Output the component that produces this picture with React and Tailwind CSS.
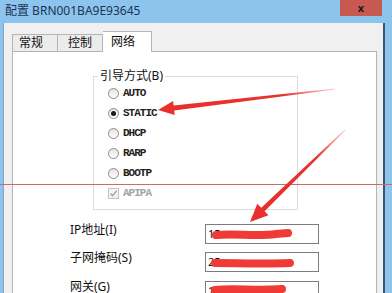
const modes = [
  { label: 'AUTO' },
  { label: 'STATIC', checked: true },
  { label: 'DHCP' },
  { label: 'RARP' },
  { label: 'BOOTP' },
];

const fields = [
  { label: 'IP地址(I)', value: '15', mt: 'mt-0' },
  { label: '子网掩码(S)', value: '25', mt: 'mt-[8px]' },
  { label: '网关(G)', value: '1', mt: 'mt-[9px]' },
];

const cjk = "font-['Noto_Sans','Noto_Sans_CJK_SC',sans-serif]";
const serifMono = "font-['Courier_New','Liberation_Mono',monospace]";

const Radio = ({ label, checked }) => (
  <div className="flex h-[20px] items-center gap-[4px]">
    <span className="flex h-[11px] w-[11px] items-center justify-center rounded-full border border-[#8a8a8a] bg-gradient-to-b from-[#e4e4e4] to-white">
      {checked && <span className="h-[5px] w-[5px] rounded-full bg-[#1a1a1a]" />}
    </span>
    <span className={`${serifMono} text-[11px] font-bold tracking-[-1px] text-[#222]`}>{label}</span>
  </div>
);

const Scribble = ({ d }) => (
  <svg className="pointer-events-none absolute left-0 top-0" width="114" height="20" viewBox="0 0 114 20">
    <path d={d} fill="none" stroke="#f03a36" strokeWidth="8" strokeLinecap="round" strokeLinejoin="round" />
  </svg>
);

const scribbles = [
  'M10 10 C30 8 50 12 70 9 L82 8',
  'M9 10 C30 10 55 11 84 10',
  'M9 8 C28 6 50 9 76 7',
];

export default function App() {
  return (
    <div className="relative flex h-[293px] w-[392px] flex-col overflow-hidden bg-[#8cc4ee]">
      <div className="flex h-[23px] shrink-0 flex-row items-start">
        <span className={`${cjk} pl-[5px] pt-[3px] text-[12px] leading-[16px] text-[#1d3553]`}>配置 BRN001BA9E93645</span>
        <span className="flex-1" />
        <span className="mr-[10px] inline-block h-[16px] w-[42px] bg-[#c75a50] text-center text-[11px] font-bold leading-[15px] text-[#2a1512]">
          x
        </span>
      </div>

      <div className="ml-[3px] mr-[7px] flex flex-1 flex-col border-l border-r-2 border-l-[#7ea6c8] border-r-[#3d5570] bg-[#f0f0f0] pl-[8px] pr-[6px] pt-[8px]">
        <div className={`${cjk} flex h-[20px] items-end text-[12px] text-[#111]`}>
          <div className="flex h-[17px] w-[46px] items-center border border-b-0 border-[#b5b5b5] bg-[#ececec] pl-[6px]">常规</div>
          <div className="flex h-[17px] w-[45px] items-center border border-b-0 border-l-0 border-[#b5b5b5] bg-[#ececec] pl-[10px]">控制</div>
          <div className="relative z-10 -mb-px flex h-[21px] w-[49px] items-start border border-b-0 border-l-0 border-[#b5b5b5] bg-white pl-[8px] pt-[1px]">网络</div>
        </div>

        <div className="flex-1 border border-[#b5b5b5] bg-white">
          <fieldset className="ml-[80px] mt-[17px] h-[141px] w-[205px] border border-[#dcdcdc]">
            <legend className={`${cjk} ml-[4px] px-[2px] text-[12px] leading-[14px] text-[#111]`}>引导方式(B)</legend>
            <div className="pl-[14px]">
              {modes.map((m) => (
                <Radio key={m.label} {...m} />
              ))}
              <div className="flex h-[20px] items-center gap-[4px]">
                <span className="flex h-[11px] w-[11px] items-center justify-center border border-[#c4c4c4] bg-[#f4f4f4]">
                  <svg width="9" height="9" viewBox="0 0 9 9">
                    <path d="M1.5 4.5 L3.5 6.8 L7.8 1.8" fill="none" stroke="#a8a8a8" strokeWidth="1.5" />
                  </svg>
                </span>
                <span className={`${serifMono} text-[11px] font-bold tracking-[-1px] text-[#a3a3a3]`}>APIPA</span>
              </div>
            </div>
          </fieldset>

          <div className="ml-[57px] mt-[14px] flex flex-col">
            {fields.map((f, i) => (
              <div key={f.label} className={`flex items-start ${f.mt}`}>
                <span className={`${cjk} w-[135px] text-[12px] leading-[12px] text-[#111]`}>{f.label}</span>
                <div className="relative h-[20px] w-[114px] border border-[#7c7c7c] bg-white">
                  <span className="block pl-[2px] text-[11px] leading-[18px] text-[#111]">{f.value}</span>
                  <Scribble d={scribbles[i]} />
                </div>
              </div>
            ))}
          </div>
        </div>
      </div>

      <div className="pointer-events-none absolute left-0 top-[184px] h-px w-full bg-[#c86b6b]" />

      <svg className="pointer-events-none absolute left-0 top-0" width="392" height="293" viewBox="0 0 392 293">
        <defs>
          <linearGradient id="a1" gradientUnits="userSpaceOnUse" x1="158" y1="110" x2="335" y2="89">
            <stop offset="0" stopColor="#e8302c" />
            <stop offset="0.7" stopColor="#e8302c" />
            <stop offset="1" stopColor="#e8302c" stopOpacity="0.2" />
          </linearGradient>
          <linearGradient id="a2" gradientUnits="userSpaceOnUse" x1="250" y1="222" x2="345" y2="130">
            <stop offset="0" stopColor="#e8302c" />
            <stop offset="0.7" stopColor="#e8302c" />
            <stop offset="1" stopColor="#e8302c" stopOpacity="0.2" />
          </linearGradient>
        </defs>
        <polygon
          fill="url(#a1)"
          points="158,110 173.1,101.1 173.6,105.6 335,88.5 335.1,89.5 174.2,110.6 174.7,115.1"
        />
        <polygon
          fill="url(#a2)"
          points="250,222 257.3,203.7 261.2,207.7 344.7,129.6 345.3,130.4 264.6,211.3 268.5,215.3"
        />
      </svg>
    </div>
  );
}
